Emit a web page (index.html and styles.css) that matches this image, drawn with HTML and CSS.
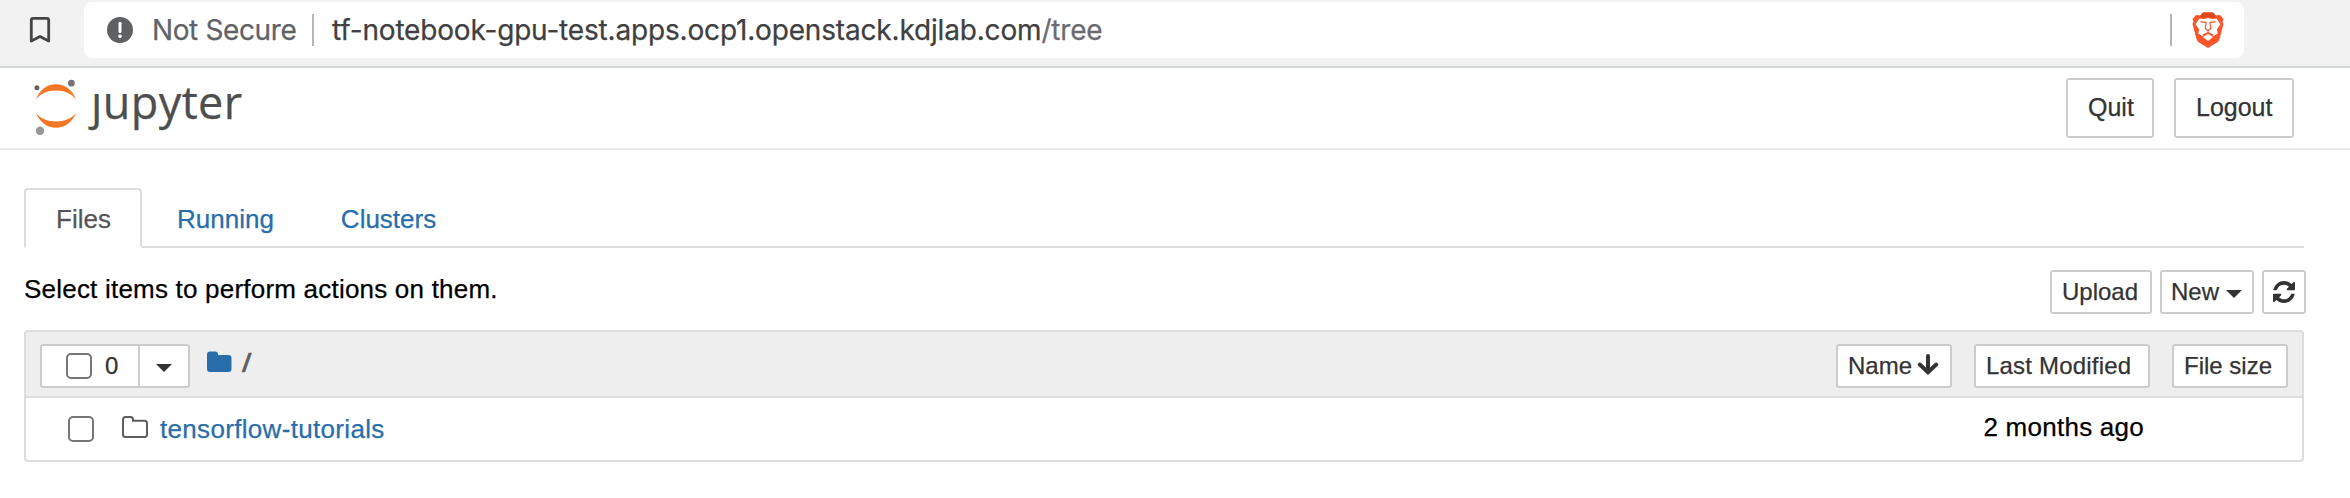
FILE: index.html
```
<!DOCTYPE html>
<html lang="en">
<head>
<meta charset="utf-8">
<title>Home Page - Jupyter</title>
<link rel="stylesheet" href="styles.css">
</head>
<body>
<div class="toolbar">
  <svg class="bookmark" width="22" height="28" viewBox="0 0 22 28"><path d="M2.3 4.2Q2.3 2.3 4.2 2.3H17.8Q19.7 2.3 19.7 4.2V25L11 20.4L2.3 25Z" fill="none" stroke="#454545" stroke-width="2.8" stroke-linejoin="round"/></svg>
  <div class="address">
    <svg class="info" width="26" height="26" viewBox="0 0 26 26"><circle cx="13" cy="13" r="13" fill="#5f6062"/><path d="M13 6.2V14.6" stroke="#fff" stroke-width="3" stroke-linecap="round"/><circle cx="13" cy="19.2" r="1.8" fill="#fff"/></svg>
    <span class="insecure">Not Secure</span>
    <span class="sep"></span>
    <span class="url">tf-notebook-gpu-test.apps.ocp1.openstack.kdjlab.com<span class="path">/tree</span></span>
    <span class="sep sep-end"></span>
    <svg class="brave" width="32" height="36" viewBox="0 0 32 36">
      <path d="M8.5 3.5L4 3L0.5 7L1.500 10L0.500 12L4.500 27Q5 29 7 30.500L16 36L25 30.500Q27 29 27.500 27L31.500 12L30.500 10L31.500 7L28 3L23.500 3.500L21 .5H11Z" fill="#fb542b"/>
      <path d="M7.500 4.500L11 .5H21L24.500 4.500L20 6L16 5L12 6Z" fill="#dd4719"/>
      <path d="M7.500 6.500L12 7L16 6L20 7L24.500 6.500L28.500 12.200L24.800 17.500L25.800 21.500L21.500 24L16 20.500L10.500 24L6.200 21.500L7.200 17.500L3.500 12.200Z" fill="#fff"/>
      <path d="M16 22L21 25L16 29L11 25Z" fill="#fff"/>
      <path d="M8.500 9.600L14 10.600L13.900 13L13.200 15.600L14 17.500M23.500 9.600L18 10.600L18.100 13L18.800 15.600L18 17.500" fill="none" stroke="#fb542b" stroke-width="1.200"/>
      <path d="M13 16.800L16 17.600L19 16.800L16.500 19.200V20.200L21.500 22.600L20.200 23.600L16 21.600L11.800 23.600L10.500 22.600L15.500 20.200V19.200Z" fill="#fb542b"/>
    </svg>
  </div>
</div>

<div class="header">
  <div class="logo">
    <svg width="44" height="58" viewBox="0 0 44 58">
      <path d="M2 20.500C5.500 11 13 5.300 22 5.300S38.500 11 42 20.500C37.500 14.600 30.500 11.500 22 11.500S6.500 14.600 2 20.500Z" fill="#f37726"/>
      <path d="M2 34C5.500 43 13 48.700 22 48.700S38.500 43 42 34C37.500 39.600 30.500 42.500 22 42.500S6.500 39.600 2 34Z" fill="#f37726"/>
      <circle cx="37.400" cy="4.200" r="3.400" fill="#767677"/>
      <circle cx="2.900" cy="8.700" r="2.500" fill="#616262"/>
      <circle cx="6" cy="51.700" r="4.200" fill="#989798"/>
    </svg>
    <span class="wordmark"><span class="stem">j</span>upyter</span>
  </div>
  <button class="btn btn-lg">Quit</button>
  <button class="btn btn-lg logout">Logout</button>
</div>

<div class="page">
  <div class="tabs">
    <div class="tab active">Files</div>
    <div class="tab">Running</div>
    <div class="tab">Clusters</div>
  </div>

  <div class="actions">
    <div class="hint">Select items to perform actions on them.</div>
    <button class="btn upload">Upload</button>
    <button class="btn new">New<span class="caret"></span></button>
    <button class="btn refresh"><svg width="22" height="22" viewBox="0 0 1536 1536"><path fill="#333" d="M1511 928q0 5-1 7-64 268-268 434.500T764 1536q-146 0-282.500-55T238 1324l-129 129q-19 19-45 19t-45-19-19-45V960q0-26 19-45t45-19h448q26 0 45 19t19 45-19 45l-137 137q71 66 161 102t187 36q134 0 250-65t186-179q11-17 53-117 8-23 30-23h192q13 0 22.500 9.500t9.500 22.500zm25-800v448q0 26-19 45t-45 19h-448q-26 0-45-19t-19-45 19-45l138-138Q969 256 768 256q-134 0-250 65T332 500q-11 17-53 117-8 23-30 23H50q-13 0-22.500-9.500T18 608v-7q65-268 270-434.500T768 0q146 0 284 55.500T1297 212l130-129q19-19 45-19t45 19 19 45z"/></svg></button>
  </div>

  <div class="list">
    <div class="list-head">
      <div class="select-group">
        <div class="select-all"><span class="check"></span><span>0</span></div>
        <div class="select-menu"><span class="caret"></span></div>
      </div>
      <svg class="crumb-folder" width="25" height="22" viewBox="0 0 25 22"><path d="M0 3.500Q0 .5 3 .5H8Q11 .5 11 3.500V4.100H21.500Q24.500 4.100 24.500 7.100V18Q24.500 21 21.500 21H3Q0 21 0 18Z" fill="#296eaa"/></svg>
      <span class="slash">/</span>
      <button class="btn sort-name">Name<svg width="22" height="22" viewBox="0 0 22 22"><path d="M11 2V17.500M2.800 10.500L11 18.200L19.200 10.500" fill="none" stroke="#333" stroke-width="4" stroke-linecap="round" stroke-linejoin="miter"/></svg></button>
      <button class="btn sort-modified">Last Modified</button>
      <button class="btn sort-size">File size</button>
    </div>
    <div class="row">
      <span class="check"></span>
      <svg class="folder" width="26" height="22" viewBox="0 0 26 22"><path d="M1 3.500Q1 1 3.500 1H8.500Q11 1 11 3.500V4.700H22.500Q25 4.700 25 7.200V18.500Q25 21 22.500 21H3.500Q1 21 1 18.500Z" fill="none" stroke="#5e5e5e" stroke-width="2"/></svg>
      <span class="name">tensorflow-tutorials</span>
      <span class="modified">2 months ago</span>
    </div>
  </div>
</div>
</body>
</html>
```
FILE: styles.css
```
* { box-sizing: border-box; }

body {
  margin: 0;
  background: #fff;
  color: #000;
  font: 26px/36px "Liberation Sans", Arial, sans-serif;
  -webkit-text-stroke: 0.25px currentColor;
}

/* Browser toolbar */
.toolbar {
  display: flex;
  height: 68px;
  padding: 2px 106px 0 29px;
  background: #f2f2f2;
  border-bottom: 2px solid #d3d8dd;
}
.bookmark { flex: none; margin: 14px 33px 0 0; }
.address {
  flex: 1;
  display: flex;
  align-items: center;
  height: 56px;
  padding: 0 20px 0 23px;
  background: #fff;
  border-radius: 8px;
  font: 28px/34px Inter, sans-serif;
  white-space: nowrap;
}
.insecure { width: 160px; margin-left: 19px; color: #5f6368; letter-spacing: -0.38px; }
.sep { width: 2px; height: 32px; background: #b3b6ba; }
.sep-end { margin-left: auto; }
.url { margin-left: 18px; color: #404040; letter-spacing: -0.17px; }
.path { color: #6b6b6e; }
.brave { margin-left: 20px; }

/* Notebook header */
.header {
  display: flex;
  align-items: flex-start;
  height: 82px;
  padding: 10px 56px 0 34px;
  border-bottom: 2px solid #e7e7e7;
}
.logo { display: flex; margin: 1px auto 0 0; }
.wordmark {
  margin: -2px 0 0 13px;
  color: #4e4e4e;
  font: 45px/50px "Open Sans", sans-serif;
  letter-spacing: 0.4px;
}
/* the logo's j has no dot */
.stem { display: inline-block; clip-path: inset(17px -6px -12px -12px); }

.btn {
  height: 44px;
  padding: 0 10px;
  background: #fff;
  border: 2px solid #ccc;
  border-radius: 3px;
  color: #333;
  font: 24px/40px "Liberation Sans", Arial, sans-serif;
  text-align: left;
  white-space: nowrap;
  -webkit-text-stroke: 0.25px currentColor;
}
.btn-lg { width: 88px; height: 60px; padding: 0 20px 2px; font-size: 25px; line-height: 54px; }
.logout { width: 120px; margin-left: 20px; }

.caret {
  display: inline-block;
  border: 8px solid transparent;
  border-top-color: #333;
  border-bottom: 0;
}

/* Tabs */
.page { padding: 38px 46px 0 24px; }
.tabs { display: flex; gap: 3px; height: 60px; border-bottom: 2px solid #ddd; }
.tab {
  height: 60px;
  padding: 0 30px;
  border: 2px solid transparent;
  line-height: 58px;
  color: #296eaa;
}
.active {
  width: 118px;
  border-color: #ddd;
  border-bottom-color: #fff;
  border-radius: 4px 4px 0 0;
  color: #555;
}

/* Action bar */
.actions { display: flex; height: 82px; padding-top: 22px; margin-right: -2px; }
.hint { flex: 1; padding-top: 1px; line-height: 36px; letter-spacing: 0.21px; }
.upload { width: 102px; }
.new { width: 94px; margin-left: 8px; padding-left: 9px; }
.new .caret { margin: 0 0 2px 7px; }
.refresh { display: flex; align-items: center; width: 44px; margin-left: 8px; padding: 0 9px; }

/* File list */
.list { border: 2px solid #ddd; border-radius: 4px; }
.list-head {
  display: flex;
  align-items: flex-start;
  height: 66px;
  padding: 12px 14px 0;
  background: #eee;
  border-bottom: 2px solid #ddd;
}
.select-group {
  display: flex;
  width: 150px;
  height: 44px;
  background: #fff;
  border: 2px solid #ccc;
  border-radius: 3px;
  color: #333;
  font-size: 24px;
  line-height: 40px;
}
.select-all { display: flex; align-items: center; gap: 13px; width: 98px; padding-left: 24px; border-right: 2px solid #ccc; }
.select-menu { display: flex; align-items: center; padding: 4px 0 0 16px; }
.check { flex: none; width: 26px; height: 26px; background: #fff; border: 2px solid #767676; border-radius: 5px; }
.crumb-folder { margin: 7px 0 0 17px; }
.slash { margin: 1px auto 0 11px; color: #5e5e5e; font-size: 26px; line-height: 36px; -webkit-text-stroke: 0.5px #5e5e5e; transform: scaleX(1.3); }
.sort-name { width: 116px; }
.sort-name svg { margin-left: 5px; vertical-align: -2px; }
.sort-modified { width: 176px; margin-left: 22px; letter-spacing: 0.2px; }
.sort-size { width: 116px; margin-left: 22px; }
.row { display: flex; align-items: center; height: 62px; padding: 0 158px 0 42px; }
.folder { margin: -4px 12px 0 28px; }
.name { color: #296eaa; letter-spacing: 0.32px; }
.modified { margin: -4px 0 0 auto; letter-spacing: 0.25px; }
```
